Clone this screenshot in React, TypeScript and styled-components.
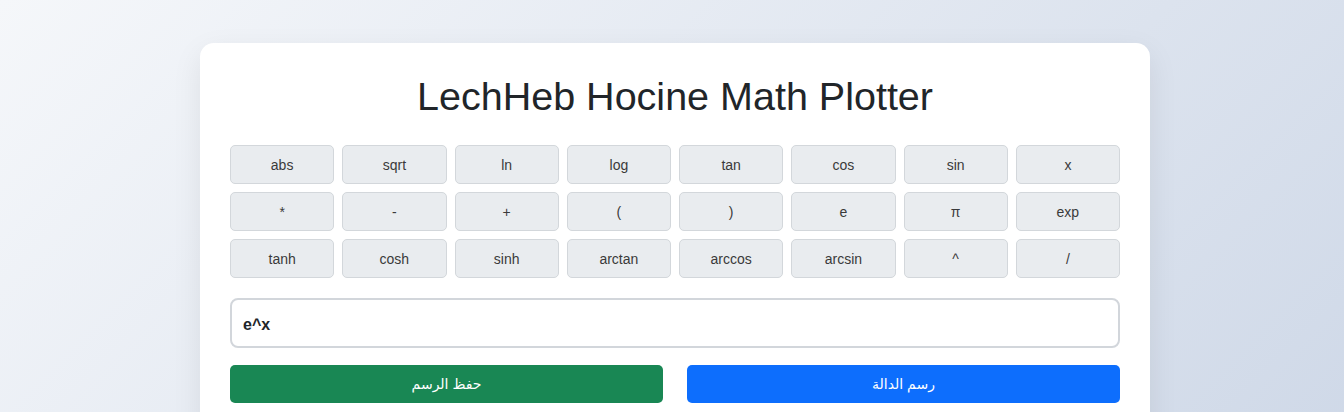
import React, { useState } from "react";
import styled, { createGlobalStyle } from "styled-components";

const GlobalStyle = createGlobalStyle`
  html, body {
    margin: 0;
    padding: 0;
  }
  body {
    font-family: "Liberation Sans", Arial, sans-serif;
    background: linear-gradient(135deg, #f5f7fa 0%, #c3cfe2 100%);
    min-height: 1000px;
    color: #212529;
  }
`;

const Page = styled.div`
  display: flex;
  justify-content: center;
  padding: 43px 0 40px 6px;
`;

const Card = styled.div`
  width: 950px;
  box-sizing: border-box;
  background: #fff;
  border-radius: 14px;
  padding: 30px;
  box-shadow: 0 10px 30px rgba(0, 0, 0, 0.08);
`;

const Title = styled.h1`
  margin: 0 0 26px;
  text-align: center;
  font-size: 39.5px;
  font-weight: 400;
  line-height: 46px;
  color: #212529;
`;

const KeyGrid = styled.div`
  display: grid;
  grid-template-columns: repeat(8, 1fr);
  gap: 8px;
`;

const Key = styled.button`
  height: 39px;
  border: 1px solid #d3d7db;
  border-radius: 5px;
  background: #e9ecef;
  color: #3a3a3a;
  font-family: "Liberation Sans", Arial, sans-serif;
  font-size: 14px;
  cursor: pointer;
  &:hover {
    background: #dee2e6;
  }
`;

const Expression = styled.input`
  display: block;
  width: 100%;
  box-sizing: border-box;
  height: 50px;
  margin-top: 20px;
  padding: 4px 10px 0 11px;
  border: 2px solid #d2d6db;
  border-radius: 8px;
  font-family: "Liberation Sans", Arial, sans-serif;
  font-size: 16px;
  font-weight: 700;
  color: #212529;
  outline: none;
`;

const Actions = styled.div`
  display: grid;
  grid-template-columns: 1fr 1fr;
  gap: 24px;
  margin-top: 17px;
`;

const ActionButton = styled.button<{ $tone: "save" | "plot" }>`
  height: 38px;
  border: none;
  border-radius: 5px;
  background: ${(p) => (p.$tone === "save" ? "#198754" : "#0d6efd")};
  color: #fff;
  font-family: "Liberation Sans", "DejaVu Sans", sans-serif;
  font-size: 14px;
  cursor: pointer;
`;

const PlotArea = styled.div`
  margin-top: 24px;
  height: 480px;
  border: 1px solid #e5e7eb;
  border-radius: 8px;
`;

const keys = [
  "abs", "sqrt", "ln", "log", "tan", "cos", "sin", "x",
  "*", "-", "+", "(", ")", "e", "π", "exp",
  "tanh", "cosh", "sinh", "arctan", "arccos", "arcsin", "^", "/",
];

export default function App() {
  const [expr, setExpr] = useState("e^x");

  return (
    <>
      <GlobalStyle />
      <Page>
        <Card>
          <Title>LechHeb Hocine Math Plotter</Title>
          <KeyGrid>
            {keys.map((k) => (
              <Key key={k} onClick={() => setExpr(expr + k)}>
                {k}
              </Key>
            ))}
          </KeyGrid>
          <Expression value={expr} onChange={(e) => setExpr(e.target.value)} />
          <Actions>
            <ActionButton $tone="save">حفظ الرسم</ActionButton>
            <ActionButton $tone="plot">رسم الدالة</ActionButton>
          </Actions>
          <PlotArea />
        </Card>
      </Page>
    </>
  );
}
